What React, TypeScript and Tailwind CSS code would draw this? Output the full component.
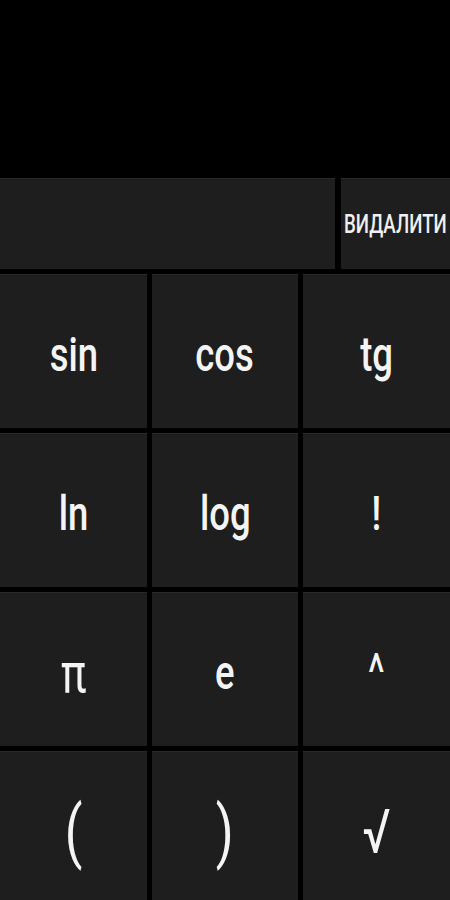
import React from 'react';

const keys: { label: string; size?: string }[] = [
  { label: 'sin' },
  { label: 'cos' },
  { label: 'tg' },
  { label: 'ln' },
  { label: 'log' },
  { label: '!' },
  { label: 'π', size: 'text-[56px]' },
  { label: 'e' },
  { label: '^', size: 'text-[54px]' },
  { label: '(', size: 'text-[68px] font-normal' },
  { label: ')', size: 'text-[68px] font-normal' },
  { label: '√', size: 'text-[62px]' },
];

const Key = ({ label, size }: { label: string; size?: string }) => (
  <button className="flex items-center justify-center border-t border-[#2a2a2a] bg-[#1e1e1e] pt-[6px] text-[#f4f4f4]">
    <span className={`inline-block scale-x-[0.76] leading-none ${size ?? 'text-[48px] font-medium'}`}>{label}</span>
  </button>
);

const App = () => {
  return (
    <div
      className="flex h-[900px] w-[450px] flex-col overflow-hidden bg-black"
      style={{ fontFamily: 'Roboto, "Noto Sans", sans-serif' }}
    >
      <div className="h-[178px] shrink-0" />
      <div className="flex h-[91px] shrink-0 gap-[6px]">
        <div className="w-[335px] shrink-0 border-t border-[#2a2a2a] bg-[#1e1e1e]" />
        <button className="flex min-w-0 flex-1 items-center justify-center border-t border-[#2a2a2a] bg-[#1e1e1e] text-[#f0f0f0]">
          <span className="inline-block shrink-0 scale-x-[0.72] whitespace-nowrap text-[26px] leading-none font-medium">
            ВИДАЛИТИ
          </span>
        </button>
      </div>
      <div className="mt-[5px] grid shrink-0 grid-cols-3 grid-rows-[repeat(4,154px)] gap-[5px]">
        {keys.map((k) => (
          <Key key={k.label} label={k.label} size={k.size} />
        ))}
      </div>
    </div>
  );
};

export default App;
